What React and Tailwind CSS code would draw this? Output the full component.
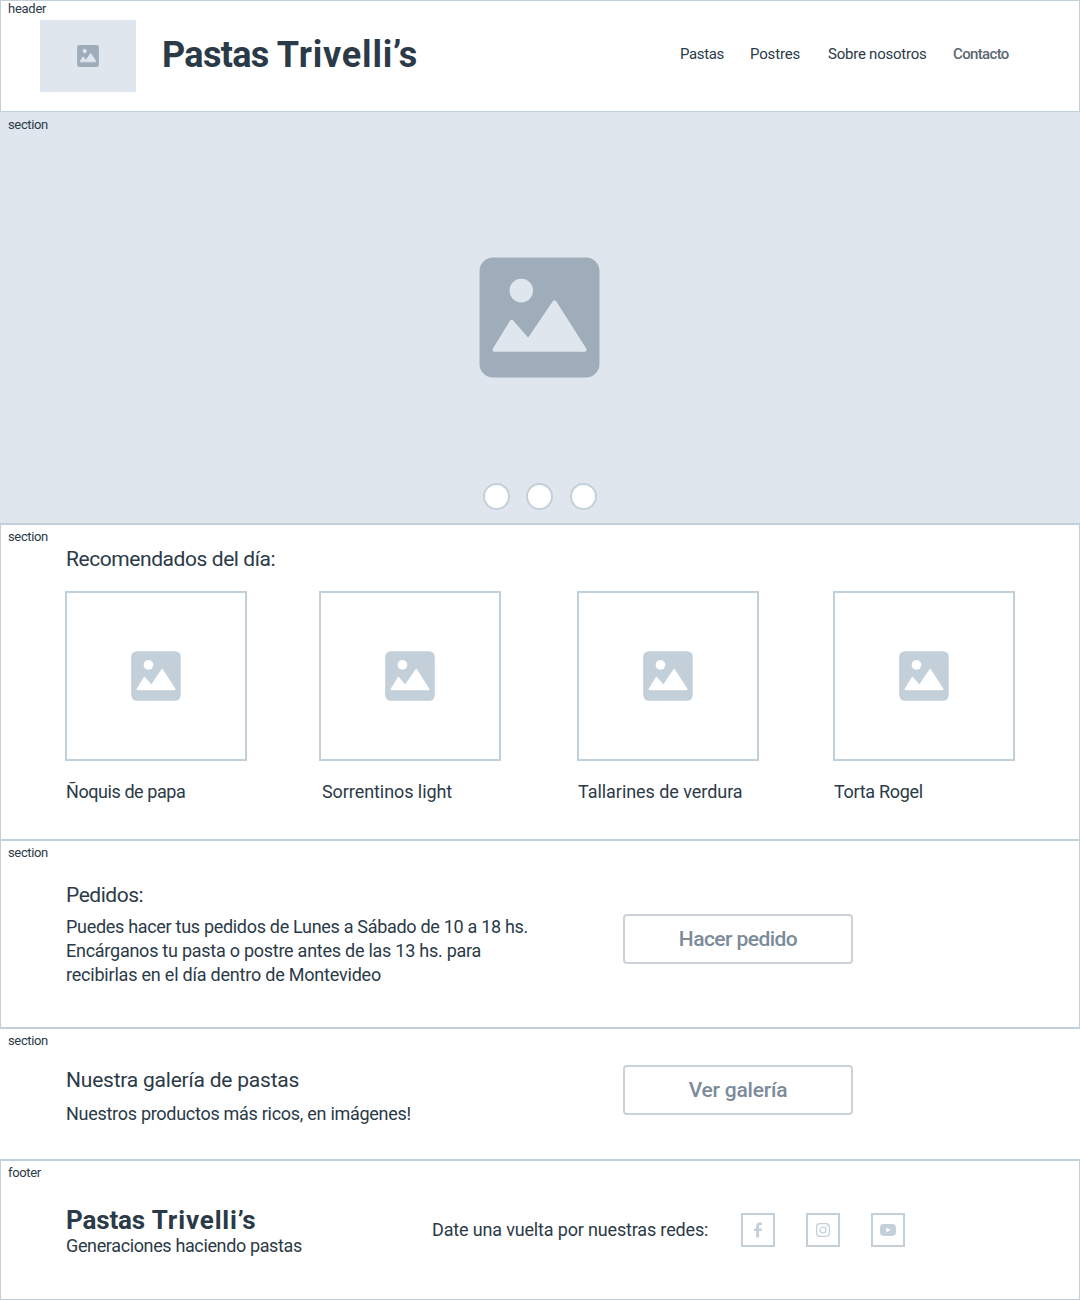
import React from "react";

function Picture({ className, fg, bg }) {
  return (
    <svg viewBox="-0.5 -0.5 121 121" className={className}>
      <rect width="120" height="120" rx="13.5" fill={fg} />
      <circle cx="41.8" cy="33.1" r="11.8" fill={bg} />
      <path
        d="M15 92.2 L32.2 64.3 L48.8 83.4 L75 44.8 L105.2 92.2 Z"
        fill={bg}
        stroke={bg}
        strokeWidth="4"
        strokeLinejoin="round"
      />
    </svg>
  );
}

function Tag({ children, className }) {
  return <div className={`pl-[8px] text-[13px] ${className}`}>{children}</div>;
}

function Card({ label, className, caption }) {
  return (
    <article className={`w-[182px] shrink-0 ${className}`}>
      <div className="flex h-[170px] items-center justify-center border-2 border-[#c3cfd9]">
        <Picture className="size-[50px]" fg="#c3cfd9" bg="#ffffff" />
      </div>
      <h3 className={`mt-[19px] text-[18px] leading-[24px] whitespace-nowrap ${caption}`}>{label}</h3>
    </article>
  );
}

function Action({ children, className }) {
  return (
    <button
      className={`flex h-[50px] w-[230px] items-center justify-center rounded-[4px] border-2 border-[#cbd2d9] text-[21px] leading-[28px] font-medium text-[#7b8b9a] ${className}`}
    >
      {children}
    </button>
  );
}

function Social({ children, label }) {
  return (
    <a aria-label={label} className="flex size-[34px] items-center justify-center border-2 border-[#c3cfd9] text-[#c3cfd9]">
      {children}
    </a>
  );
}

export default function App() {
  return (
    <div className="h-[1300px] w-[1080px] overflow-hidden bg-white font-['Roboto',sans-serif] text-[#2b3a47]">
      <header className="h-[112px] border border-[#c3cfd9]">
        <Tag className="-ml-px h-[19px] leading-[15px] tracking-[-0.27px]">header</Tag>
        <div className="flex">
          <div className="ml-[39px] flex h-[72px] w-[96px] items-center justify-center bg-[#dfe6ee]">
            <Picture className="size-[22px]" fg="#9eadb9" bg="#dfe6ee" />
          </div>
          <h1 className="ml-[26px] h-[72px] w-[518px] text-[36px] leading-[70px] font-bold tracking-[0.8px] [word-spacing:-0.5px]">
            <span className="tracking-[-0.7px]">Pastas</span> Trivelli’s
          </h1>
          <nav className="flex text-[15px] leading-[68px] whitespace-nowrap">
            <a className="w-[70px] tracking-[-0.37px]">Pastas</a>
            <a className="w-[78px] tracking-[-0.16px]">Postres</a>
            <a className="w-[125px] tracking-[-0.23px]">Sobre nosotros</a>
            <a className="font-medium tracking-[-0.65px] text-[#5d6873]">Contacto</a>
          </nav>
        </div>
      </header>

      <section className="flex h-[412px] flex-col border-b border-[#c3cfd9] bg-[#dfe6ee]">
        <Tag className="pt-[3px] leading-[20px] tracking-[-0.36px]">section</Tag>
        <div className="flex h-[348px] justify-center pt-[122px] pr-px">
          <Picture className="size-[121px]" fg="#9eadb9" bg="#dfe6ee" />
        </div>
        <div className="flex justify-center">
          <i className="size-[27px] rounded-full border-2 border-[#c3cfd9] bg-white" />
          <i className="ml-[16px] size-[27px] rounded-full border-2 border-[#c3cfd9] bg-white" />
          <i className="ml-[17px] size-[27px] rounded-full border-2 border-[#c3cfd9] bg-white" />
        </div>
      </section>

      <section className="h-[316px] border border-[#c3cfd9]">
        <Tag className="-ml-px h-[20px] pt-[2px] leading-[20px] tracking-[-0.36px]">section</Tag>
        <h2 className="ml-[65px] h-[46px] text-[21px] leading-[28px] tracking-[-0.43px]">Recomendados del día:</h2>
        <div className="flex pl-[64px]">
          <Card label="Ñoquis de papa" className="mr-[72px]" caption="pl-px tracking-[-0.43px]" />
          <Card label="Sorrentinos light" className="mr-[76px]" caption="pl-[3px] tracking-[-0.07px]" />
          <Card label="Tallarines de verdura" className="mr-[74px]" caption="pl-px tracking-[-0.05px]" />
          <Card label="Torta Rogel" className="" caption="pl-px tracking-[-0.3px]" />
        </div>
      </section>

      <section className="h-[188px] border border-[#c3cfd9]">
        <Tag className="-ml-px h-[40px] pt-[2px] leading-[20px] tracking-[-0.36px]">section</Tag>
        <div className="flex pl-[65px]">
          <div className="w-[557px]">
            <h2 className="text-[21px] leading-[28px] tracking-[-0.48px]">Pedidos:</h2>
            <div className="mt-[6px] text-[18px] leading-[24px]">
              <p className="tracking-[-0.305px]">Puedes hacer tus pedidos de Lunes a Sábado de 10 a 18 hs.</p>
              <p className="tracking-[-0.255px]">Encárganos tu pasta o postre antes de las 13 hs. para</p>
              <p className="tracking-[-0.21px]">recibirlas en el día dentro de Montevideo</p>
            </div>
          </div>
          <Action className="mt-[33px] tracking-[-0.56px]">Hacer pedido</Action>
        </div>
      </section>

      <section className="h-[132px] border-y border-[#c3cfd9]">
        <Tag className="h-[36px] pt-[2px] leading-[20px] tracking-[-0.36px]">section</Tag>
        <div className="flex pl-[66px]">
          <div className="w-[557px]">
            <h2 className="pt-px text-[21px] leading-[28px] tracking-[-0.216px]">Nuestra galería de pastas</h2>
            <p className="mt-[8px] text-[18px] leading-[24px] tracking-[-0.282px]">
              Nuestros productos más ricos, en imágenes!
            </p>
          </div>
          <Action className="tracking-[-0.22px]">Ver galería</Action>
        </div>
      </section>

      <footer className="h-[140px] border border-[#c3cfd9]">
        <Tag className="-ml-px h-[43px] pt-[2px] leading-[20px] tracking-[-0.33px]">footer</Tag>
        <div className="flex pl-[65px]">
          <div className="w-[366px]">
            <h2 className="text-[26px] leading-[32px] font-bold tracking-[0.85px]">
              <span className="tracking-[-0.15px]">Pastas</span> Trivelli’s
            </h2>
            <p className="-mt-[2px] text-[18px] leading-[24px] tracking-[-0.366px]">Generaciones haciendo pastas</p>
          </div>
          <p className="w-[309px] pt-[14px] text-[18px] leading-[24px] tracking-[-0.165px]">
            Date una vuelta por nuestras redes:
          </p>
          <div className="mt-[9px] flex gap-[31px]">
            <Social label="Facebook">
              <svg viewBox="0 0 8 16" className="h-[16px] w-[8px]" fill="currentColor">
                <path d="M2.2 15.6V9H0V6.5h2.2V4C2.2 1.7 3.6.4 5.8.4H8v2.5H6.5C5.5 2.9 5.1 3.3 5.1 4.2v2.3H8L7.7 9H5.1v6.600z" />
              </svg>
            </Social>
            <Social label="Instagram">
              <svg viewBox="0 0 14 14" className="size-[14px]" fill="none" stroke="currentColor" strokeWidth="1.2">
                <rect x="0.6" y="0.6" width="12.8" height="12.8" rx="3.4" />
                <circle cx="7" cy="7" r="3" />
                <circle cx="10.8" cy="3.2" r="0.8" fill="currentColor" stroke="none" />
              </svg>
            </Social>
            <Social label="YouTube">
              <svg viewBox="0 0 16 12" className="h-[12px] w-[16px]">
                <path
                  fill="currentColor"
                  d="M2.5.3C5.5-.1 10.5-.1 13.5.3 15.3.5 16 1.6 16 6s-.7 5.5-2.5 5.7c-3 .4-8 .4-11 0C.7 11.5 0 10.4 0 6S.7.5 2.5.3z"
                />
                <path fill="#ffffff" d="M6.2 3.5v5L10.6 6z" />
              </svg>
            </Social>
          </div>
        </div>
      </footer>
    </div>
  );
}
